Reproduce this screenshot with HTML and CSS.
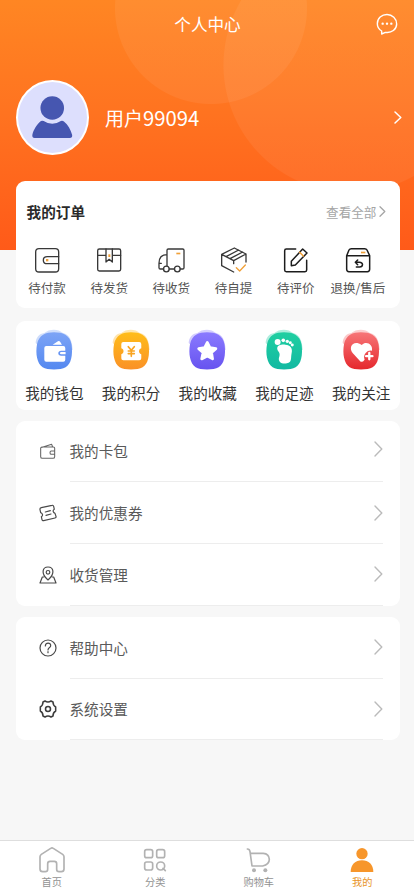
FILE: index.html
```html
<!DOCTYPE html>
<html lang="zh-CN">
<head>
<meta charset="utf-8">
<meta name="viewport" content="width=device-width, initial-scale=1">
<title>个人中心</title>
<link rel="stylesheet" href="styles.css">
</head>
<body>
<div class="page">
  <header class="hero">
    <div class="topbar">
      <h1 class="title">个人中心</h1>
      <svg class="chat" viewBox="0 0 66 66"><path d="M17 54V63L28 58C47 61 62 49 62 33C62 17 49 4.500 33 4.500C17 4.500 4 16 4 32C4 41 9 49 17 54"/><g class="dots"><circle cx="20" cy="32" r="3.500"/><circle cx="33" cy="32" r="3.500"/><circle cx="46" cy="32" r="3.500"/></g></svg>
    </div>
    <div class="profile">
      <div class="avatar"><svg viewBox="0 0 122 126"><circle cx="61" cy="36" r="35.500"/><path d="M27 75Q31 73 35 75Q61 92 87 75Q92 73 97 77C108 86 117 101 121 117Q122 126 114 126H8Q0 126 1 117C4 102 15 84 27 75Z"/></svg></div>
      <span class="name">用户<span class="digits">99094</span></span>
      <svg class="go" viewBox="0 0 8 13"><path d="M1 1L6.800 6.500L1 12"/></svg>
    </div>
  </header>

  <main>
    <section class="card orders">
      <div class="orders-head"><h2>我的订单</h2><a class="all">查看全部<svg viewBox="0 0 7 11"><path d="M1 .8L5.800 5.500L1 10.200"/></svg></a></div>
      <div class="order-list">
        <div class="order"><svg viewBox="0 0 78 78"><rect x="5" y="5" width="69" height="70" rx="10"/><path d="M74 29H40Q28 29 28 39.500Q28 50 40 50H74"/><path class="accent-fill" d="M36 36h7v7h-7z"/></svg><span>待付款</span></div>
        <div class="order"><svg viewBox="0 0 78 78"><rect x="5" y="6" width="69" height="66" rx="5"/><path d="M5 25H30M49 25H74M30 6V45L39.500 37L49 45V6"/><path class="accent-fill" d="M37 22h6v8h-6z"/></svg><span>待发货</span></div>
        <div class="order"><svg viewBox="0 0 78 78"><path d="M17 66H7Q3 66 3 62V49C3 32 11 23 27 23M27 57V10Q27 6 31 6H74Q78 6 78 10V62Q78 66 74 66H67M34 66H49M3 49H10"/><circle cx="25" cy="66" r="8.500"/><circle cx="58" cy="66" r="8.500"/><path class="accent-fill" d="M55 17h12v5H55z"/></svg><span>待收货</span></div>
        <div class="order"><svg viewBox="0 0 78 78"><path d="M2 22L40 3L75 21V45M2 22V56L38 75M2 22L38 41L75 21M38 41V50M15 29L53 9M27 35L65 15"/><path class="accent" d="M46 62L56 72L73 54"/></svg><span>待自提</span></div>
        <div class="order dark"><svg viewBox="0 0 78 78"><path d="M38 6H10Q5 6 5 11V69Q5 74 10 74H66Q71 74 71 69V40M25 56V43L59 6L72 18L37 54Z"/><path class="accent" d="M50 16L61 27"/></svg><span>待评价</span></div>
        <div class="order dark"><svg viewBox="0 0 78 78"><path d="M5 26L12 9Q14 5 19 5H59Q64 5 66 9L74 26V67Q74 74 67 74H12Q5 74 5 67ZM5 26H74M38 39L31 46L38 53M32 46H43C57 46 54 60 44 60H34"/><path class="accent-fill" d="M48 14h13v5H48z"/></svg><span>退换/售后</span></div>
      </div>
    </section>

    <section class="card tools">
      <svg class="defs" width="0" height="0"><defs>
        <linearGradient id="blue" x2="0" y2="1"><stop stop-color="#7da4f6"/><stop offset="1" stop-color="#5488f0"/></linearGradient>
        <linearGradient id="gold" x2="0" y2="1"><stop stop-color="#ffbd19"/><stop offset="1" stop-color="#fa9127"/></linearGradient>
        <linearGradient id="violet" x2="0" y2="1"><stop stop-color="#8a7aff"/><stop offset="1" stop-color="#6753ef"/></linearGradient>
        <linearGradient id="green" x2="0" y2="1"><stop stop-color="#20cfa1"/><stop offset="1" stop-color="#12b9a2"/></linearGradient>
        <linearGradient id="red" x2="0" y2="1"><stop stop-color="#f77678"/><stop offset="1" stop-color="#e5282d"/></linearGradient>
        <path id="halo" d="M2 42C3 26 12 14 28 12C42 -1 70 -2 84 12C104 16 112 36 113 62L60 100Z"/>
        <path id="blob" d="M57 10C83 10 105 18 110 47C114 77 109 105 92 115C77 124 37 124 23 115C6 104 1 74 6 46C12 18 32 10 57 10Z"/>
      </defs></svg>
      <div class="tool"><svg viewBox="0 0 116 124"><g fill="url(#blue)"><use href="#halo" opacity=".35"/><use href="#blob"/></g><path fill="#fff" d="M53 47L69 37Q73 35 76 39L81 47ZM34 51H85Q91 51 91 57V65H79C67 65 67 80 79 80H91V92Q91 98 85 98H34Q28 98 28 92V57Q28 51 34 51ZM79 69H92V76H79Q75 76 75 72.500Q75 69 79 69Z"/></svg><span>我的钱包</span></div>
      <div class="tool"><svg viewBox="0 0 116 124"><g fill="url(#gold)"><use href="#halo" opacity=".35"/><use href="#blob"/></g><path fill="#fff" d="M34 39H82Q88 39 88 45V58C79 60 79 74 88 76V88Q88 94 82 94H34Q28 94 28 88V76C37 74 37 60 28 58V45Q28 39 34 39Z"/><path class="yen" d="M49 53L58 64L67 53M58 64V82M49 66H67M49 74H67"/></svg><span>我的积分</span></div>
      <div class="tool"><svg viewBox="0 0 116 124"><g fill="url(#violet)"><use href="#halo" opacity=".35"/><use href="#blob"/></g><path fill="#fff" stroke="#fff" stroke-width="8" stroke-linejoin="round" d="M58 40L66 56L84 59L71 71L74 90L58 81L41 90L45 71L32 59L50 56Z"/></svg><span>我的收藏</span></div>
      <div class="tool"><svg viewBox="0 0 116 124"><g fill="url(#green)"><use href="#halo" opacity=".35"/><use href="#blob"/></g><g fill="#fff"><circle cx="38" cy="39" r="9"/><circle cx="55" cy="34" r="5.500"/><circle cx="67" cy="37" r="5"/><circle cx="76" cy="41" r="4.500"/><circle cx="82" cy="48" r="4.500"/><path d="M37 61C34 47 52 46 61 47C76 48 84 58 80 73C77 86 82 101 66 103C50 107 39 97 42 86C48 71 39 69 37 61Z"/></g></svg><span>我的足迹</span></div>
      <div class="tool"><svg viewBox="0 0 116 124"><g fill="url(#red)"><use href="#halo" opacity=".35"/><use href="#blob"/></g><path fill="#fff" d="M59 48C72 34 94 45 90 65A20 20 0 0 0 68 92Q60 103 54 96L32 72C18 55 34 31 59 48Z"/><path stroke="#fff" stroke-width="7" stroke-linecap="round" d="M82 72V91M72.500 81.500H91.500"/></svg><span>我的关注</span></div>
    </section>

    <section class="card menu">
      <div class="row"><svg class="mi thin" viewBox="0 0 54 54"><path d="M8 15H43Q47 15 47 19V44Q47 49 42 49H10Q5 49 5 44V17L38 7L41 15M47 27H37Q33 27 33 32Q33 37 37 37H47"/></svg><div class="row-body"><span>我的卡包</span><svg class="arrow raised" viewBox="0 0 9 16"><path d="M1 1L7.800 8L1 15"/></svg></div></div>
      <div class="row"><svg class="mi" viewBox="0 0 54 54"><path d="M7 11L39 4Q43 3 44 7L46 16C40 19 42 26 48 28L51 37Q52 41 48 42L14 50Q10 51 9 47L7 38C13 35 11 28 5 26L3 17Q2 12 7 11ZM19 24L34 20M21 34L36 30"/></svg><div class="row-body"><span>我的优惠券</span><svg class="arrow" viewBox="0 0 9 16"><path d="M1 1L7.800 8L1 15"/></svg></div></div>
      <div class="row"><svg class="mi" viewBox="0 0 54 54"><path d="M27 42C4 22 11 3 27 3C43 3 50 22 27 42ZM14 33H10L3 51H51L44 33H40"/><circle cx="27" cy="19" r="5.500"/></svg><div class="row-body"><span>收货管理</span><svg class="arrow" viewBox="0 0 9 16"><path d="M1 1L7.800 8L1 15"/></svg></div></div>
    </section>

    <section class="card menu">
      <div class="row"><svg class="mi" viewBox="0 0 54 54"><circle cx="27" cy="27" r="24"/><path d="M19 21C19 9 36 10 35 20C35 26 27 25 27 33M27 38V41"/></svg><div class="row-body"><span>帮助中心</span><svg class="arrow" viewBox="0 0 9 16"><path d="M1 1L7.800 8L1 15"/></svg></div></div>
      <div class="row"><svg class="mi heavy" viewBox="0 0 54 54"><path d="M18 3Q27 9 36 3L42 6Q42 16 50 21V33Q42 37 42 48L36 51Q27 45 18 51L12 48Q12 37 4 33V21Q12 16 12 6Z"/><circle cx="27" cy="27" r="7.500"/></svg><div class="row-body"><span>系统设置</span><svg class="arrow" viewBox="0 0 9 16"><path d="M1 1L7.800 8L1 15"/></svg></div></div>
    </section>
  </main>

  <nav class="tabbar">
    <a class="tab"><svg viewBox="0 0 84 84"><path d="M6 32Q6 28 10 25L38 7Q42 4 46 7L74 25Q78 28 78 32V69Q78 77 70 77H63Q56 77 56 70V53Q56 46 49 46H36Q29 46 29 53V70Q29 77 22 77H14Q6 77 6 69Z"/></svg><span>首页</span></a>
    <a class="tab"><svg viewBox="0 0 84 84"><rect x="11" y="11" width="24" height="24" rx="6"/><rect x="47" y="11" width="24" height="24" rx="6"/><rect x="11" y="48" width="24" height="24" rx="6"/><circle cx="59" cy="60" r="12"/><path d="M66 67L73 74"/></svg><span>分类</span></a>
    <a class="tab"><svg viewBox="0 0 84 84"><path d="M7 9Q14 9 15 17L21 60H53Q73 56 73 40Q72 23 55 22H17"/><g class="solid"><circle cx="27" cy="73" r="6"/><circle cx="61" cy="73" r="6"/></g></svg><span>购物车</span></a>
    <a class="tab active"><svg viewBox="0 0 84 84"><g class="solid"><circle cx="42" cy="23" r="17"/><path d="M8 78C8 56 22 43 42 43C62 43 76 56 76 78Z"/></g></svg><span>我的</span></a>
  </nav>
</div>
</body>
</html>
```
FILE: styles.css
```css
* { box-sizing: border-box; }
body { margin: 0; background: #f7f7f7; color: #333; font-family: "Noto Sans CJK SC", sans-serif; }
svg { display: block; flex: none; fill: none; stroke-linecap: round; stroke-linejoin: round; overflow: visible; }
h1, h2 { margin: 0; font-weight: 400; }
span, h1, h2, a { white-space: nowrap; }
.page { height: 896px; display: flex; flex-direction: column; overflow: hidden; }

.hero {
  height: 250px; flex: none; color: #fff;
  background:
    radial-gradient(circle at 211px 8px, rgba(255,255,255,.06) 95.5px, transparent 96.5px),
    radial-gradient(circle at 351px 65px, rgba(255,255,255,.06) 127px, transparent 128px),
    linear-gradient(#ff8623, #ff7320 45%, #ff5a19);
}
.topbar { height: 48px; display: grid; grid-template-columns: 1fr auto 1fr; align-items: center; padding-right: 16px; }
.title { grid-column: 2; font-size: 16.6px; line-height: 24px; margin: -1px 0 0 17px; }
.chat { width: 22px; height: 22px; justify-self: end; stroke: #fff; stroke-width: 4.2; }
.dots { fill: #fff; stroke: none; }
.profile { margin: 32px 12px 0 16px; display: flex; align-items: center; height: 75px; }
.avatar { width: 73px; height: 75px; border: 2px solid #fff; border-radius: 50%; background: #dddffd; display: flex; justify-content: center; align-items: center; }
.avatar svg { width: 40.500px; height: 42px; fill: #4656b0; margin-bottom: 1px; }
.name { font-size: 19px; margin: -2px 0 0 16px; flex: 1; }
.digits { font-size: 20.300px; }
.go { width: 8px; height: 13px; stroke: #fff; stroke-width: 1.5; }

main { flex: 1; margin: -69px 14.500px 0 16px; display: flex; flex-direction: column; }
.card { background: #fff; border-radius: 9px; flex: none; }
.orders { height: 126.500px; margin-bottom: 13.500px; padding: 18px 10.600px 0 0; }
.orders-head { display: flex; justify-content: space-between; align-items: center; height: 24px; padding: 0 2.500px 0 10.600px; }
.orders-head h2 { font-size: 14.600px; font-weight: 700; color: #2a2a2a; }
.all { display: flex; align-items: center; gap: 3px; font-size: 12.600px; color: #a5a5a5; }
.all svg { width: 7px; height: 11px; stroke: #a5a5a5; stroke-width: 1.3; }
.order-list { display: grid; grid-template-columns: repeat(6, 1fr); margin-top: 23.500px; }
.order { display: flex; flex-direction: column; align-items: center; font-size: 12.500px; line-height: 18px; color: #555; gap: 6px; }
.order svg { width: 26px; height: 26px; stroke: #383838; stroke-width: 4; }
.order.dark svg { stroke: #1c1c1c; stroke-width: 4.5; }
.order .accent { stroke: #f0a038; }
.order .accent-fill { fill: #f0a038; stroke: none; }

.tools { height: 88.500px; margin-bottom: 11px; padding-top: 8px; display: grid; grid-template-columns: repeat(5, 1fr); position: relative; }
.defs { position: absolute; }
.tool { display: flex; flex-direction: column; align-items: center; font-size: 14.600px; line-height: 22px; gap: 12px; }
.tool svg { width: 38.600px; height: 41.300px; }
.yen { stroke: #f9a421; stroke-width: 5; }

.menu { margin-bottom: 11px; }
.row { height: 61.750px; display: flex; align-items: center; padding: 0 16.500px 0 23.500px; }
.mi { width: 18px; height: 18px; margin-left: -.5px; stroke: #4a4a4a; stroke-width: 3.6; }
.mi.thin { stroke: #666; stroke-width: 3.2; }
.mi.heavy { stroke-width: 4.6; stroke: #3d3d3d; }
.row-body { flex: 1; height: 100%; margin-left: 12.500px; display: flex; align-items: center; justify-content: space-between; font-size: 14.600px; color: #5a5a5a; border-bottom: 1px solid #ededed; }
.arrow { width: 9px; height: 16px; stroke: #bbb; stroke-width: 1.4; }
.raised { margin-bottom: 4px; }

.tabbar { height: 56px; flex: none; background: #fff; border-top: 1px solid #dedede; display: grid; grid-template-columns: repeat(4, 1fr); padding-top: 4.500px; }
.tab { display: flex; flex-direction: column; align-items: center; font-size: 10.200px; line-height: 15px; color: #929292; gap: .5px; }
.tab svg { width: 28px; height: 28px; stroke: #b2b2b2; stroke-width: 5; }
.tab .solid { fill: #b2b2b2; stroke: none; }
.tab.active { color: #e89429; }
.tab.active .solid { fill: #f7962b; }
```
